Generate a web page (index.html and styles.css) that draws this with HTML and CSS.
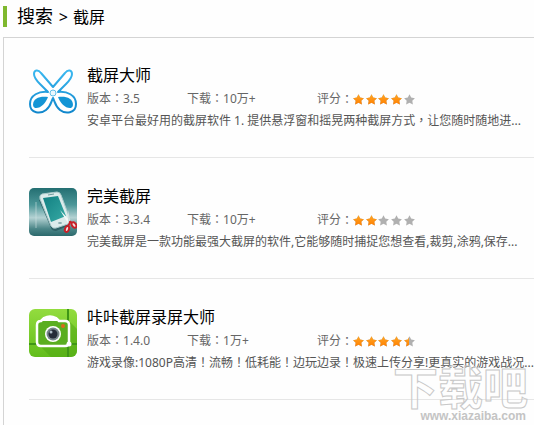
FILE: index.html
```html
<!DOCTYPE html>
<html lang="zh-CN">

<head>
    <meta charset="utf-8"/>
    <meta name="viewport" content="width=device-width, initial-scale=1.0">
    <title>搜索 &gt; 截屏</title>
    <link rel="stylesheet" href="styles.css">
</head>
<body>
    <svg class="defs" width="0" height="0" aria-hidden="true">
        <defs>
            <linearGradient id="orange" x1="0" y1="0" x2="0" y2="1">
                <stop offset="0" stop-color="#ffa726"/>
                <stop offset="1" stop-color="#ff7f00"/>
            </linearGradient>
            <path id="star" d="M5.500 0.300 L7.200 3.600 L10.900 4.200 L8.300 6.800 L8.900 10.500 L5.500 8.800 L2.100 10.500 L2.700 6.800 L0.100 4.200 L3.800 3.600Z"/>
            <g id="row">
                <use href="#star" x="0"/>
                <use href="#star" x="13"/>
                <use href="#star" x="25"/>
                <use href="#star" x="38"/>
                <use href="#star" x="51"/>
            </g>
            <clipPath id="score2"><rect width="24" height="11"/></clipPath>
            <clipPath id="score4"><rect width="50" height="11"/></clipPath>
            <clipPath id="score45"><rect width="56" height="11"/></clipPath>
        </defs>
    </svg>
    <h1 class="title">搜索 <span class="keyword"><span class="arrow">&gt;</span> 截屏</span></h1>
    <div class="result">
        <ul class="app-list">
            <li class="app">
                <svg class="app-icon" viewBox="0 0 48 48" aria-hidden="true">
                    <defs>
                        <linearGradient id="blue" x1="0" y1="0" x2="0" y2="1">
                            <stop offset="0" stop-color="#3bb8f0"/>
                            <stop offset="1" stop-color="#1187cc"/>
                        </linearGradient>
                    </defs>
                    <path d="M24 20L12 6C9 2 5 3 5 7C5 11 8 14 11 17L19 25C10 24 1 28 1 37C1 47 12 47 17 43C22 39 22 35 24 31C26 35 26 39 31 43C36 47 47 47 47 37C47 28 38 24 29 25L37 17C40 14 43 11 43 7C43 3 39 2 36 6Z" fill="#fff" stroke="url(#blue)" stroke-width="2" stroke-linejoin="round"/>
                    <path d="M4 38C4 31 11 29 19 30C17 36 11 42 6 41Q4 40 4 38Z" fill="#1495d5"/>
                    <path d="M44 38C44 31 37 29 29 30C31 36 37 42 42 41Q44 40 44 38Z" fill="#1495d5"/>
                    <circle cx="24" cy="26" r="3" fill="#eaf7fd" stroke="#62bfe9"/>
                </svg>
                <div class="app-info">
                    <h2 class="app-name">截屏大师</h2>
                    <div class="app-meta">
                        <span>版本<i class="mark" lang="zh-TW">：</i>3.5</span>
                        <span>下载<i class="mark" lang="zh-TW">：</i>10万+</span>
                        <span class="rate">评分<i class="mark" lang="zh-TW">：</i><svg class="stars" viewBox="0 0 62 11" role="img" aria-label="4"><use href="#row" fill="#b0b0b0"/><use href="#row" fill="url(#orange)" clip-path="url(#score4)"/></svg></span>
                    </div>
                    <p class="app-desc">安卓平台最好用的截屏软件 1. 提供悬浮窗和摇晃两种截屏方式<i class="mark" lang="zh-TW">，</i>让您随时随地进...</p>
                </div>
            </li>
            <li class="app">
                <svg class="app-icon" viewBox="0 0 48 48" aria-hidden="true">
                    <defs>
                        <linearGradient id="teal" x1="0" y1="0" x2="0" y2="1">
                            <stop offset="0" stop-color="#246f72"/>
                            <stop offset=".35" stop-color="#4b9698"/>
                            <stop offset=".62" stop-color="#b4d2d3"/>
                            <stop offset=".85" stop-color="#4a8587"/>
                            <stop offset="1" stop-color="#2c696c"/>
                        </linearGradient>
                        <linearGradient id="screen" x1="0" y1="0" x2="1" y2="1">
                            <stop offset="0" stop-color="#128082"/>
                            <stop offset="1" stop-color="#37aaa5"/>
                        </linearGradient>
                    </defs>
                    <rect width="48" height="48" rx="5" fill="url(#teal)"/>
                    <path d="M7 14V40" stroke="#d0e3e3" opacity=".6"/>
                    <path d="M10 12L22 40Q23 43 27 43L39 38L41 34L28 10Z" fill="#2f6267"/>
                    <path d="M13 6L28 4Q31 4 32 7L41 31Q42 34 39 36L27 40Q24 41 22 38L11 11Q10 7 13 6Z" fill="#dcebeb" stroke="#a9c9ca"/>
                    <path d="M14 10L29 8L37 28L22 34Z" fill="url(#screen)"/>
                    <path d="M19 7L25 6" stroke="#6f9a9c"/>
                    <ellipse cx="31" cy="35" rx="2" ry="1" fill="#87abad"/>
                    <path d="M31 22L43 35L40 37Z" fill="#f3f7f7"/>
                    <path d="M39 22L42 36L39 36Z" fill="#cfdedf"/>
                    <g fill="#f2dede" stroke="#c82028" stroke-width="2">
                        <path d="M42 33L39 38M40 34L45 35"/>
                        <ellipse cx="38" cy="41" rx="2" ry="3" transform="rotate(20 38 41)"/>
                        <ellipse cx="45" cy="37" rx="2" ry="3" transform="rotate(-35 45 37)"/>
                    </g>
                </svg>
                <div class="app-info">
                    <h2 class="app-name">完美截屏</h2>
                    <div class="app-meta">
                        <span>版本<i class="mark" lang="zh-TW">：</i>3.3.4</span>
                        <span>下载<i class="mark" lang="zh-TW">：</i>10万+</span>
                        <span class="rate">评分<i class="mark" lang="zh-TW">：</i><svg class="stars" viewBox="0 0 62 11" role="img" aria-label="2"><use href="#row" fill="#b0b0b0"/><use href="#row" fill="url(#orange)" clip-path="url(#score2)"/></svg></span>
                    </div>
                    <p class="app-desc">完美截屏是一款功能最强大截屏的软件,它能够随时捕捉您想查看,裁剪,涂鸦,保存...</p>
                </div>
            </li>
            <li class="app">
                <svg class="app-icon" viewBox="0 0 48 48" aria-hidden="true">
                    <defs>
                        <linearGradient id="green" x1="0" y1="0" x2="0" y2="1">
                            <stop offset="0" stop-color="#93dc3e"/>
                            <stop offset="1" stop-color="#62bd1b"/>
                        </linearGradient>
                        <clipPath id="tile"><rect width="48" height="48" rx="6"/></clipPath>
                    </defs>
                    <g clip-path="url(#tile)">
                        <rect width="48" height="48" fill="url(#green)"/>
                        <path d="M11 37L41 13L48 20V48H22Z" fill="#4da512" opacity=".5"/>
                        <path d="M39 0V48M0 35H48" stroke="#3f9616" stroke-width="2"/>
                        <path d="M12 12L15 9Q21 6 27 9L30 12H36Q40 12 40 16V33Q40 37 36 37H12Q8 37 8 33V16Q8 12 12 12Z" fill="#5aae20" stroke="#fff" stroke-width="2.500"/>
                        <path d="M12 12L15 9Q21 6 27 9L30 12Z" fill="#fff"/>
                        <circle cx="24" cy="25" r="8" fill="#fff"/>
                        <circle cx="24" cy="25" r="6.500" fill="#77858a"/>
                        <circle cx="24" cy="25" r="4.500" fill="#262b38"/>
                        <circle cx="22" cy="23" r="1.500" fill="#aebbc7"/>
                        <circle cx="34" cy="17" r="2" fill="#db6a1c"/>
                        <circle cx="40" cy="35" r="2.500" fill="#fff"/>
                    </g>
                </svg>
                <div class="app-info">
                    <h2 class="app-name">咔咔截屏录屏大师</h2>
                    <div class="app-meta">
                        <span>版本<i class="mark" lang="zh-TW">：</i>1.4.0</span>
                        <span>下载<i class="mark" lang="zh-TW">：</i>1万+</span>
                        <span class="rate">评分<i class="mark" lang="zh-TW">：</i><svg class="stars" viewBox="0 0 62 11" role="img" aria-label="4.5"><use href="#row" fill="#b0b0b0"/><use href="#row" fill="url(#orange)" clip-path="url(#score45)"/></svg></span>
                    </div>
                    <p class="app-desc">游戏录像:1080P高清<i class="mark" lang="zh-TW">！</i>流畅<i class="mark" lang="zh-TW">！</i>低耗能<i class="mark" lang="zh-TW">！</i>边玩边录<i class="mark" lang="zh-TW">！</i>极速上传分享!更真实的游戏战况...</p>
                </div>
            </li>
        </ul>
    </div>
    <div class="watermark">
        <span class="watermark-name">下载吧</span>
        <span class="watermark-url">www.xiazaiba.com</span>
    </div>
</body>
</html>
```
FILE: styles.css
```css
body {
    position: relative;
    display: flex;
    flex-direction: column;
    min-height: 100vh;
    box-sizing: border-box;
    margin: 0;
    padding: 6px 0 0 3px;
    overflow: hidden;
    background: #fefefe;
    color: #000;
    font-family: "Noto Sans", "Noto Sans CJK SC", sans-serif;
}
.defs {
    position: absolute;
}
.title {
    margin: 0 0 10px;
    padding-left: 10px;
    border-left: 4px solid #7fb82e;
    font-size: 18px;
    font-weight: normal;
    line-height: 20px;
}
.keyword {
    font-size: 16px;
}
.arrow {
    margin: 0 1px;
}
.result {
    flex: 1;
    padding-left: 25px;
    border-top: 1px solid #d4d4d4;
    border-left: 1px solid #d4d4d4;
}
.app-list {
    margin: -1px 0 0;
    padding: 0;
    list-style: none;
}
.app {
    display: flex;
    gap: 10px;
    padding: 30px 0 25px;
    border-bottom: 1px solid #e6e6e6;
}
.app-icon {
    flex: none;
    width: 48px;
    height: 48px;
}
.app-info {
    flex: 1;
    min-width: 0;
    margin-top: -5px;
    white-space: nowrap;
}
.app-name {
    margin: 0;
    font-size: 16px;
    font-weight: normal;
    line-height: 26px;
}
.app-meta {
    display: grid;
    grid-template-columns: 100px 130px 1fr;
    color: #666;
    font-size: 12px;
    line-height: 22px;
}
.app-desc {
    margin: 0;
    color: #555;
    font-size: 12px;
    line-height: 22px;
}
/* centred full-width punctuation */
.mark {
    display: inline-block;
    font-family: "Noto Sans CJK TC", sans-serif;
    font-style: normal;
    line-height: 1;
}
.rate {
    display: flex;
    align-items: center;
}
.stars {
    width: 62px;
    height: 11px;
}
.watermark {
    position: absolute;
    right: 6px;
    bottom: 3px;
    display: flex;
    flex-direction: column;
    align-items: flex-end;
    pointer-events: none;
}
.watermark-name {
    color: transparent;
    font-size: 45px;
    font-weight: bold;
    line-height: 44px;
    -webkit-text-stroke: 1px #c8c8c8;
}
.watermark-url {
    padding-right: 2px;
    color: #c4c4c4;
    font-family: "Liberation Sans", Arial, sans-serif;
    font-size: 12px;
    font-weight: bold;
    line-height: 12px;
}
```
